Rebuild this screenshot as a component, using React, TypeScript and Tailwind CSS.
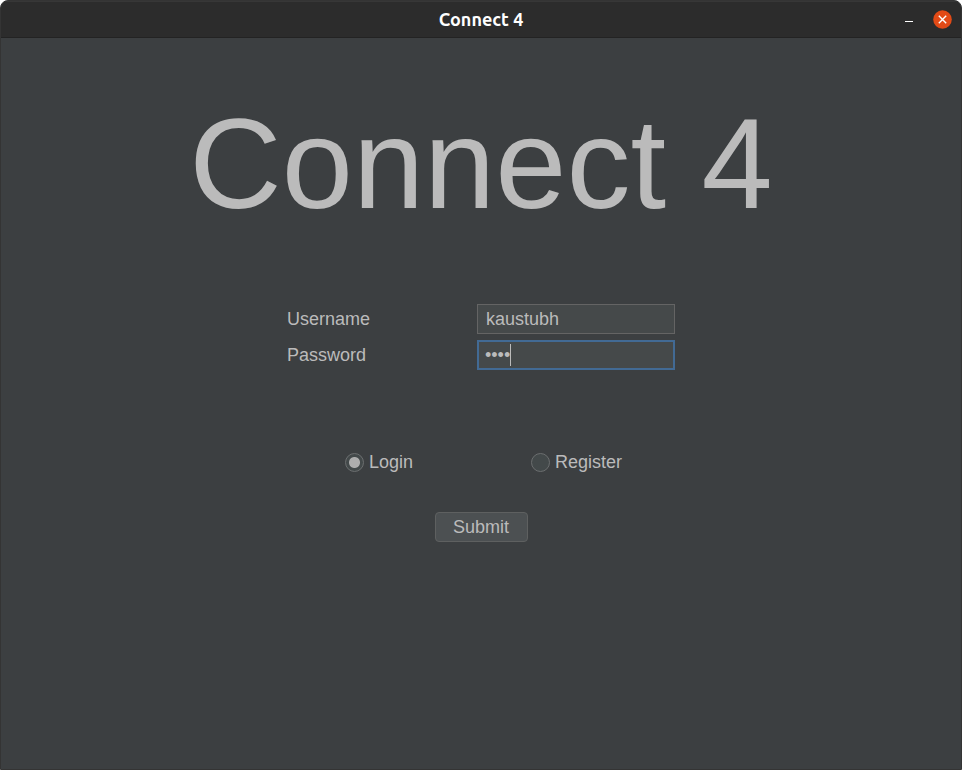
import { useState } from "react";

const fieldClass =
  "block h-[30px] w-full rounded-none bg-[#45494a] text-[18px] leading-5 text-[#bbbbbb] outline-none";

function TitleBar() {
  return (
    <header className="relative flex h-[37px] shrink-0 items-center justify-center border-b border-[#232323] bg-[#2c2c2c] shadow-[inset_0_1px_0_#373737]">
      <h2 className="font-['Ubuntu','Noto_Sans',sans-serif] text-[18px] leading-6 font-bold text-white">Connect 4</h2>
      <div className="absolute inset-y-0 right-[9px] flex items-center gap-[15px]">
        <button type="button" aria-label="Minimize" className="flex size-[19px] items-center justify-center">
          <svg width="19" height="19" viewBox="0 0 19 19">
            <rect x="6" y="11" width="8" height="1" fill="#fff" />
          </svg>
        </button>
        <button type="button" aria-label="Close" className="flex size-[19px] items-center justify-center">
          <svg width="19" height="19" viewBox="0 0 19 19">
            <circle cx="9.5" cy="9.5" r="9.3" fill="#e24a16" />
            <path d="M5.8 5.8l7.4 7.4M13.2 5.8l-7.4 7.4" stroke="#fff" strokeWidth="1.4" />
          </svg>
        </button>
      </div>
    </header>
  );
}

function RadioOption(props: { label: string; checked: boolean; onSelect: () => void }) {
  return (
    <label className="flex items-center gap-[5px]">
      <input
        type="radio"
        name="mode"
        checked={props.checked}
        onChange={props.onSelect}
        className="size-[19px] appearance-none rounded-full border border-[#6b6e6f] bg-[#43494a] checked:bg-[radial-gradient(circle,#adadad_5px,#43494a_6px)]"
      />
      <span className="leading-5">{props.label}</span>
    </label>
  );
}

export default function App() {
  const [mode, setMode] = useState("login");
  return (
    <div className="bg-white">
      <div className="flex min-h-screen flex-col overflow-hidden rounded-t-lg border border-[#343434] bg-[#3c3f41] font-['Liberation_Sans',Arial,sans-serif] text-[18px] text-[#bbbbbb]">
        <TitleBar />
        <main className="flex flex-1 flex-col items-center">
          <h1 className="mt-[52px] text-[128px] leading-[147px]">Connect 4</h1>
          <form className="flex flex-col items-center" onSubmit={(e) => e.preventDefault()}>
            <div className="mt-[67px] grid grid-cols-[190px_198px] items-center gap-y-1.5">
              <label htmlFor="username" className="leading-5">Username</label>
              <input id="username" type="text" defaultValue="kaustubh" className={`${fieldClass} border border-[#646464] px-2`} />
              <label htmlFor="password" className="leading-5">Password</label>
              <div className="relative">
                <input id="password" type="password" defaultValue="aaaa" className={`${fieldClass} border-2 border-[#426a94] px-1.5`} />
                <span className="absolute top-1 left-[33px] h-[22px] w-px bg-[#bbbbbb]" />
              </div>
            </div>
            <div className="mt-[82px] flex gap-[118px] pl-[5px]">
              <RadioOption label="Login" checked={mode === "login"} onSelect={() => setMode("login")} />
              <RadioOption label="Register" checked={mode === "register"} onSelect={() => setMode("register")} />
            </div>
            <button type="submit" className="mt-10 h-[30px] w-[93px] rounded-[4px] border border-[#5e6060] bg-[#4c5052] leading-5">
              Submit
            </button>
          </form>
        </main>
      </div>
    </div>
  );
}
